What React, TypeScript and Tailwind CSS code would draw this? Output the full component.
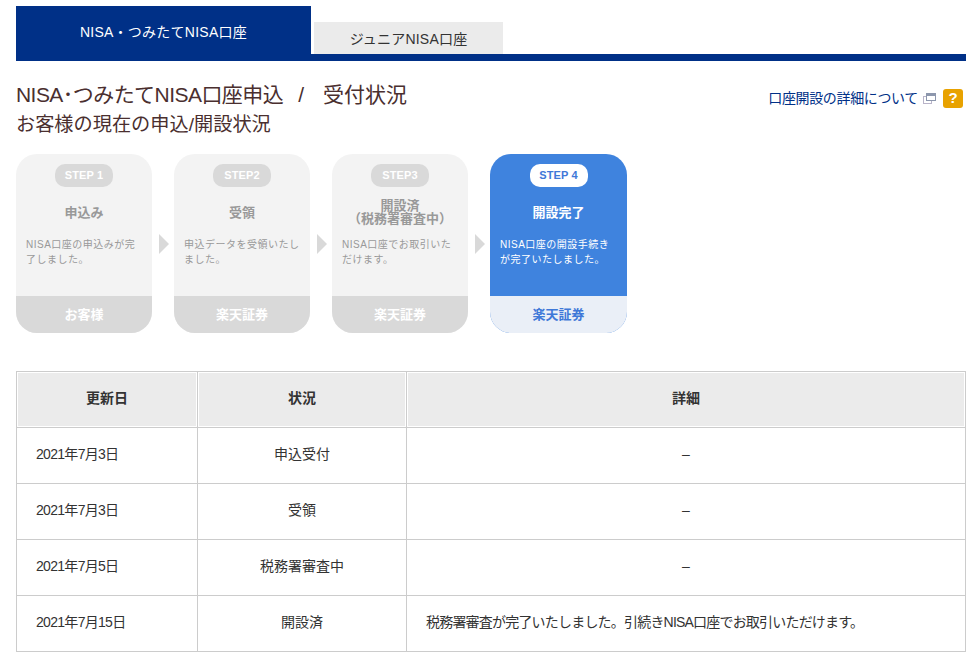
const font = "font-['Liberation_Sans','Noto_Sans_CJK_JP',sans-serif]";

type Step = { no: string; title: string[]; desc: string[]; who: string; active?: boolean };

const steps: Step[] = [
  { no: "STEP 1", title: ["申込み"], desc: ["NISA口座の申込みが完", "了しました。"], who: "お客様" },
  { no: "STEP2", title: ["受領"], desc: ["申込データを受領いたし", "ました。"], who: "楽天証券" },
  { no: "STEP3", title: ["開設済", "（税務署審査中）"], desc: ["NISA口座でお取引いた", "だけます。"], who: "楽天証券" },
  { no: "STEP 4", title: ["開設完了"], desc: ["NISA口座の開設手続き", "が完了いたしました。"], who: "楽天証券", active: true },
];

const rows = [
  ["2021年7月3日", "申込受付", "–"],
  ["2021年7月3日", "受領", "–"],
  ["2021年7月5日", "税務署審査中", "–"],
  ["2021年7月15日", "開設済", "税務署審査が完了いたしました。引続きNISA口座でお取引いただけます。"],
];

function StepCard({ step }: { step: Step }) {
  const a = step.active;
  return (
    <div className={`flex h-[179px] flex-col overflow-hidden rounded-[21px] ${a ? "w-[137px] bg-[#3f83de]" : "w-[136px] bg-[#f3f3f3]"}`}>
      <div className="flex h-[142px] flex-col items-center pt-[10px]">
        <div className={`flex h-[23px] w-[58px] items-center justify-center rounded-[10px] text-[11px] font-bold tracking-[0.1px] ${a ? "bg-white text-[#3f78d8]" : "bg-[#d9d9d9] text-white"}`}>
          {step.no}
        </div>
        <div className={`mt-[12px] flex h-[26px] flex-col items-center justify-center text-[13px] leading-[13px] font-bold ${a ? "text-white" : "text-[#999999]"}`}>
          {step.title.map((t) => <span key={t} className="whitespace-nowrap">{t}</span>)}
        </div>
        <div className={`mt-[12px] w-full px-[10px] text-[10px] leading-[15px] tracking-[0.5px] ${a ? "text-white" : "text-[#999999]"}`}>
          {step.desc.map((t) => <div key={t} className="whitespace-nowrap">{t}</div>)}
        </div>
      </div>
      <div className={`flex h-[37px] items-center justify-center text-[13px] font-bold ${a ? "bg-[#eaeff7] text-[#3f78d8]" : "bg-[#d9d9d9] text-white"}`}>
        {step.who}
      </div>
    </div>
  );
}

function Arrow() {
  return <div className="h-0 w-0 border-y-[10px] border-l-[10px] border-y-transparent border-l-[#d9d9d9]" />;
}

export default function App() {
  return (
    <div className={`${font} h-[661px] w-[976px] overflow-hidden bg-white pt-[6px] pr-[10px] pl-[16px] text-[#333333]`}>
      <div className="flex h-[55px] items-end gap-[3px] border-b-[7px] border-[#003087]">
        <div className="flex h-[48px] w-[295px] items-center justify-center bg-[#003087] pt-[4px] text-[14px] tracking-[0.25px] text-white">
          NISA・つみたてNISA口座
        </div>
        <div className="flex h-[32px] w-[189px] items-center justify-center bg-[#ebebeb] pt-[3px] text-[14px] tracking-[0.2px] text-[#333333]">
          ジュニアNISA口座
        </div>
      </div>

      <div className="mt-[21px] flex items-start justify-between pr-[3px]">
        <div className="text-[#4a2f2f]">
          <h1 className="text-[21px] leading-[26px] font-normal whitespace-pre">
            <span className="tracking-[-0.55px]">NISA･つみたてNISA口座申込</span>
            <span className="ml-[15px]">/</span>
            <span className="ml-[19px]">受付状況</span>
          </h1>
          <h2 className="mt-[4px] text-[19.2px] leading-[26px] font-normal">お客様の現在の申込/開設状況</h2>
        </div>
        <div className="mt-[6px] flex items-center text-[14px] leading-[20px] text-[#003087]">
          <span className="tracking-[-0.35px]">口座開設の詳細について</span>
          <svg className="mr-[7px] ml-[5px]" width="13" height="11" viewBox="0 0 13 11" fill="none">
            <rect x="0.5" y="3.5" width="8" height="7" stroke="#b9b4c9" />
            <rect x="3.5" y="0.5" width="9" height="7" fill="white" stroke="#8d97ad" />
            <rect x="4" y="1" width="8" height="2" fill="#8d97ad" />
          </svg>
          <span className="flex h-[19px] w-[20px] items-center justify-center rounded-[3px] bg-[#e8a200] text-[15px] font-bold text-white">?</span>
        </div>
      </div>

      <div className="mt-[16px] flex items-center">
        {steps.map((s, i) => (
          <div key={s.no} className="flex items-center">
            {i > 0 && <div className="flex w-[22px] justify-center pl-[2px]"><Arrow /></div>}
            <StepCard step={s} />
          </div>
        ))}
      </div>

      <table className="mt-[38px] w-[950px] table-fixed border-collapse border border-[#cccccc] text-[14px] text-[#333333]">
        <colgroup>
          <col className="w-[181px]" />
          <col className="w-[209px]" />
          <col />
        </colgroup>
        <thead>
          <tr className="h-[56px]">
            {["更新日", "状況", "詳細"].map((h) => (
              <th key={h} className="border border-[#cccccc] bg-[#ebebeb] pb-[2px] font-bold text-[#333333] shadow-[inset_0_0_0_1px_white]">{h}</th>
            ))}
          </tr>
        </thead>
        <tbody>
          {rows.map((r) => (
            <tr key={r[0] + r[1]} className="h-[56px]">
              <td className="border border-[#cccccc] pb-[2px] pl-[19px] tracking-[-0.7px]">{r[0]}</td>
              <td className="border border-[#cccccc] pb-[2px] text-center">{r[1]}</td>
              <td className={`border border-[#cccccc] pb-[2px] ${r[2] === "–" ? "text-center" : "pl-[19px] tracking-[-0.8px]"}`}>{r[2]}</td>
            </tr>
          ))}
        </tbody>
      </table>
    </div>
  );
}
